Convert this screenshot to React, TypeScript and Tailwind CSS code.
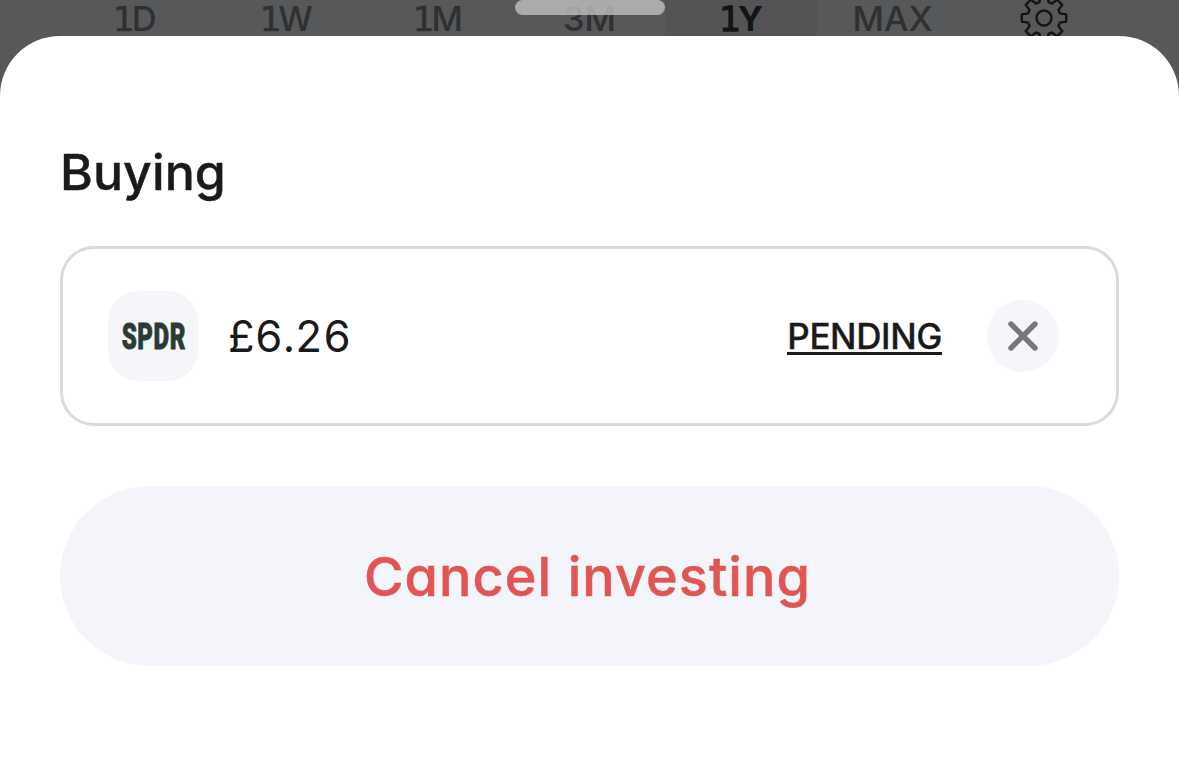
import React from "react";

interface Period {
  count?: string;
  unit: string;
  active?: boolean;
}

const periods: Period[] = [
  { count: "1", unit: "D" },
  { count: "1", unit: "W" },
  { count: "1", unit: "M" },
  { unit: "3M" },
  { count: "1", unit: "Y", active: true },
  { unit: "MAX" },
];

// Builds the cog outline: eight teeth around a centre of 24,24
const cogPath = () => {
  const parts: string[] = [];
  for (let i = 0; i < 8; i++) {
    const angle = (i * Math.PI) / 4;
    const at = (x: number, y: number) => {
      const px = 24 + x * Math.cos(angle) - y * Math.sin(angle);
      const py = 24 + x * Math.sin(angle) + y * Math.cos(angle);
      return `${px.toFixed(2)} ${py.toFixed(2)}`;
    };
    parts.push(`${i === 0 ? "M" : "L"}${at(15.8, -4.6)} L${at(22.2, -3.6)} L${at(22.2, 3.6)} L${at(15.8, 4.6)}`);
  }
  return parts.join(" ") + " Z";
};

const GearIcon: React.FC = () => (
  <svg width="48" height="48" viewBox="0 0 48 48" fill="none" stroke="#131415" strokeWidth="2.4" strokeLinejoin="round">
    <path d={cogPath()} />
    <circle cx="24" cy="24" r="7.5" />
  </svg>
);

const PeriodTabs: React.FC = () => (
  <div className="grid h-9 grid-cols-7 overflow-hidden px-[59px]">
    {periods.map((period) => (
      <div
        key={`${period.count ?? ""}${period.unit}`}
        className={`flex h-9 items-center justify-center pt-0.5 text-[34.5px] leading-none ${
          period.active ? "bg-[#545456] font-bold text-[#131415]" : "font-medium text-[#2f3031]"
        }`}
      >
        <span>
          {/* The digit takes a face whose 1 has a foot */}
          {period.count && (
            <span
              className={`-mr-[2px] font-['DejaVu_Sans',sans-serif] text-[34px] font-normal leading-none tracking-[-1px] ${
                period.active ? "[-webkit-text-stroke:1.3px_#131415]" : "[-webkit-text-stroke:0.6px_#2f3031]"
              }`}
            >
              {period.count}
            </span>
          )}
          {period.unit}
        </span>
      </div>
    ))}
    <div className="-mt-1.5 flex justify-center">
      <GearIcon />
    </div>
  </div>
);

const App: React.FC = () => {
  return (
    <div className="relative h-[768px] w-[1179px] overflow-hidden bg-[#575859] font-['Inter',sans-serif] text-[#1a1a1a] [font-feature-settings:'cv11']">
      <PeriodTabs />

      {/* Grab handle */}
      <div className="absolute left-[515px] top-0 h-[15px] w-[150px] rounded-full bg-[#c1c1c1]/80" />

      {/* Bottom sheet */}
      <div className="flex h-[732px] flex-col rounded-t-[60px] bg-white px-[60px] pt-[106px]">
        <h1 className="h-[60px] text-[50px] font-medium leading-[60px] tracking-[0.1px] [-webkit-text-stroke:0.4px_#1a1a1a]">
          Buying
        </h1>

        <div className="mt-[44px] flex h-[180px] items-center rounded-[34px] border-[3px] border-[#dadadf] pl-[45px] pr-[57px]">
          <div className="flex size-[90px] items-center justify-center rounded-[30px] bg-[#f4f6fa]">
            <span className="scale-x-[0.67] pl-px pt-0.5 font-['Roboto',sans-serif] text-[36px] font-black leading-none tracking-[0.8px] text-[#2b3b33] [-webkit-text-stroke:0.8px_#2b3b33]">
              SPDR
            </span>
          </div>
          <span className="ml-[30px] pt-0.5 text-[43.5px] leading-none tracking-[0.1px] [font-feature-settings:'tnum']">
            £6.26
          </span>
          <span className="ml-auto border-b-[3px] border-[#1a1a1a] pt-[3px] text-[35px] font-medium leading-[31px] tracking-[-0.4px] [-webkit-text-stroke:0.3px_#1a1a1a]">
            PENDING
          </span>
          <button className="ml-[45px] flex size-[72px] items-center justify-center rounded-full bg-[#f4f6fa]">
            <svg width="30" height="30" viewBox="0 0 30 30" stroke="#77787b" strokeWidth="5.4" strokeLinecap="round">
              <path d="M3 3 L27 27 M27 3 L3 27" />
            </svg>
          </button>
        </div>

        <button className="mt-[60px] h-[180px] rounded-full bg-[#f4f5fa] pr-[4px] text-[54px] font-medium tracking-[1.05px] text-[#e15554] [-webkit-text-stroke:0.5px_#e15554]">
          Cancel investing
        </button>
      </div>
    </div>
  );
};

export default App;
